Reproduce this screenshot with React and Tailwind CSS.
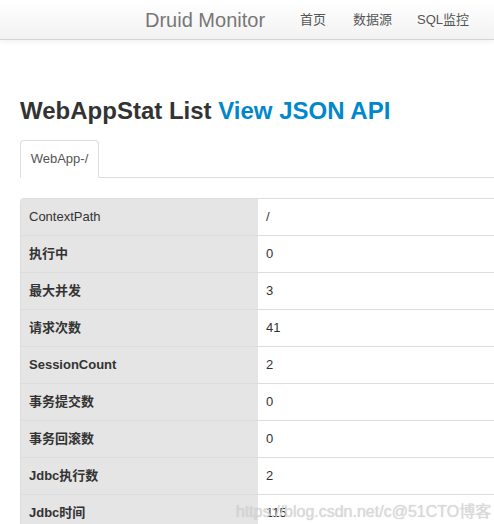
import React from "react";

const rows = [
  ["ContextPath", "/", false],
  ["执行中", "0", true],
  ["最大并发", "3", true],
  ["请求次数", "41", true],
  ["SessionCount", "2", true],
  ["事务提交数", "0", true],
  ["事务回滚数", "0", true],
  ["Jdbc执行数", "2", true],
  ["Jdbc时间", "115", true],
];

export default function App() {
  return (
    <div
      className="relative h-[524px] w-[494px] overflow-hidden bg-white text-[#333]"
      style={{ fontFamily: '"Liberation Sans", Arial, "Noto Sans CJK SC", sans-serif' }}
    >
      <div className="h-[40px] border-b border-[#d4d4d4] bg-gradient-to-b from-white to-[#f2f2f2] shadow-[0_1px_6px_rgba(0,0,0,0.08)]">
        <div className="flex h-[39px] items-center pl-[145px]">
          <span className="text-[20px] leading-none text-[#777]">Druid Monitor</span>
          <span className="ml-[35px] text-[13px] text-[#555]">首页</span>
          <span className="ml-[27px] text-[13px] text-[#555]">数据源</span>
          <span className="ml-[25px] text-[13px] text-[#555]">SQL监控</span>
        </div>
      </div>

      <div className="pl-[20px]">
        <h2 className="mt-[56px] text-[24px] font-bold leading-[30px] text-[#333]">
          WebAppStat List <span className="text-[#0088cc]">View JSON API</span>
        </h2>

        <div className="mt-[14px] flex h-[38px] items-end border-b border-[#ddd]">
          <div className="-mb-px flex h-[38px] w-[79px] items-center justify-center rounded-t-[4px] border border-b-white border-[#ddd] bg-white text-[13px] text-[#555]">
            WebApp-/
          </div>
        </div>

        <div className="mt-[20px] w-[520px] overflow-hidden rounded-tl-[4px] border-l border-t border-[#ddd]">
          {rows.map(([k, v, bold], i) => (
            <div key={i} className="flex h-[37px] border-b border-[#ddd]">
              <div
                className={`flex w-[237px] items-center bg-[#e5e5e5] pl-[8px] text-[13px] text-[#333] ${
                  bold ? "font-bold" : ""
                }`}
              >
                {k}
              </div>
              <div className="flex flex-1 items-center pl-[8px] text-[13px] text-[#333]">{v}</div>
            </div>
          ))}
        </div>
      </div>

      <div className="absolute left-[236px] top-[500px] text-[16px] text-[rgba(220,220,220,0.85)] [text-shadow:0_0_1px_rgba(120,120,120,0.4)]">
        https://blog.csdn.net/c@51CTO博客
      </div>
    </div>
  );
}
